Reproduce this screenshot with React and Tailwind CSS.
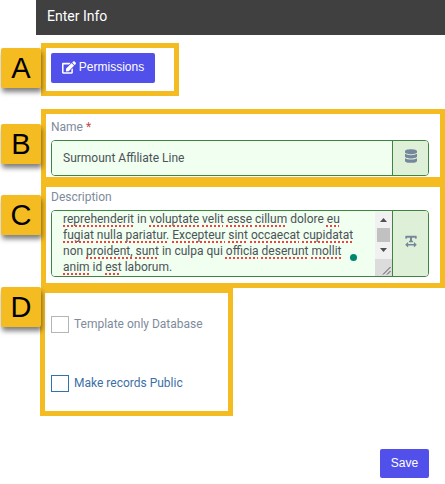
import { FaDatabase, FaEdit, FaTextWidth } from 'react-icons/fa';

// Each line is a list of words, a leading "~" marks the ones the spell checker flags
const DESCRIPTION = [
  '~reprehenderit in ~voluptate ~velit ~esse ~cillum dolore ~eu',
  '~fugiat ~nulla ~pariatur. ~Excepteur ~sint ~occaecat ~cupidatat',
  'non ~proident, ~sunt in culpa qui ~officia ~deserunt ~mollit',
  '~anim id ~est laborum.',
];

const descriptionText = DESCRIPTION.join('\n').replaceAll('~', '');

const Badge = ({ letter, className = '' }) => (
  <span
    className={`absolute z-10 flex h-10 w-10 items-center justify-center rounded-xs bg-[#f5bc22] font-['Liberation_Sans',sans-serif] text-[29px] leading-none text-black shadow-[1px_4px_5px_rgba(0,0,0,0.5)] ${className}`}
  >
    {letter}
  </span>
);

const Addon = ({ children }) => (
  <span className="flex w-9 shrink-0 items-center justify-center border-l border-[#3f8443] bg-[#dff0d8] text-[#76879b]">
    {children}
  </span>
);

const SpellingMarks = () => (
  <div aria-hidden="true" className="pointer-events-none absolute inset-x-0 top-0 pl-[11px] leading-4 text-transparent whitespace-pre">
    {DESCRIPTION.map((line, i) => (
      <div key={i}>
        {line.split(' ').map((word, j) => {
          const flagged = word.startsWith('~');
          const text = word.replace('~', '');
          return (
            <span key={j}>
              {j > 0 && ' '}
              <span className={flagged ? 'underline decoration-[#f04040] decoration-dotted decoration-2 underline-offset-2 [text-decoration-skip-ink:none]' : ''}>
                {text}
              </span>
            </span>
          );
        })}
      </div>
    ))}
  </div>
);

const Scrollbar = () => (
  <div aria-hidden="true" className="flex w-[17px] shrink-0 flex-col bg-[#f1f1f1]">
    <svg viewBox="0 0 17 17" className="h-[17px] w-[17px]" fill="#505050">
      <path d="M5 11h7L8.500 7z" />
    </svg>
    <div className="mx-[2px] h-[14px] bg-[#c1c1c1]" />
    <svg viewBox="0 0 17 17" className="h-[17px] w-[17px]" fill="#505050">
      <path d="M5 6h7l-3.500 4z" />
    </svg>
    <svg viewBox="0 0 17 17" className="mt-auto h-[17px] w-[17px] bg-[#dcdcdc]" fill="none" stroke="#505050">
      <path d="M8 15.500 15.500 8M12 15.500 15.500 12" />
    </svg>
  </div>
);

const CheckRow = ({ id, label, boxClass, labelClass }) => (
  <div className="flex items-center gap-[5px]">
    <input
      id={id}
      type="checkbox"
      className={`h-[17px] w-[18px] appearance-none border bg-white checked:bg-[#5250ea] ${boxClass}`}
    />
    <label htmlFor={id} className={labelClass}>{label}</label>
  </div>
);

export default function App() {
  return (
    <div className="bg-white pb-1 pl-9 font-['Roboto',sans-serif] text-[12px] leading-[17px] text-[#4d5257]">
      <header className="flex h-[35px] items-center bg-[#404040] px-[11px] pb-[2px] text-[14px] text-white">
        <h1>Enter Info</h1>
      </header>

      <form className="pt-2" onSubmit={(e) => e.preventDefault()}>
        {/* Permissions */}
        <section className="relative ml-[5px] w-[138px] border-[5px] border-[#f5bc22] p-[5px] pb-2">
          <Badge letter="A" className="top-0 -left-[45px]" />
          <button
            type="button"
            className="flex h-[30px] w-[104px] items-center justify-center gap-[3px] rounded-xs bg-[#5250ea] pb-[2px] font-['Liberation_Sans',sans-serif] text-white"
          >
            <FaEdit className="h-[13px] w-[14px]" />
            Permissions
          </button>
        </section>

        {/* Name */}
        <section className="relative mt-[13px] ml-[5px] border-[5px] border-[#f5bc22] pt-[5px] pr-[11px] pb-px pl-[5px]">
          <Badge letter="B" className="top-[10px] -left-[45px]" />
          <label htmlFor="name" className="block pb-1 text-[#7e8b9b]">
            Name <span className="text-[#c2474d]">*</span>
          </label>
          <div className="flex h-9 overflow-hidden rounded-sm border border-[#3f8443]">
            <input
              id="name"
              type="text"
              defaultValue="Surmount Affiliate Line"
              className="min-w-0 flex-1 bg-[#f0fff0] px-[11px] outline-none"
            />
            <Addon>
              <FaDatabase className="mb-1 h-[14px] w-3" />
            </Addon>
          </div>
        </section>

        {/* Description */}
        <section className="relative ml-[5px] border-[5px] border-[#f5bc22] pt-[2px] pr-[11px] pb-[6px] pl-[5px]">
          <Badge letter="C" className="top-2 -left-[45px]" />
          <label htmlFor="description" className="block pb-1 text-[#7e8b9b]">Description</label>
          <div className="flex h-[67px] overflow-hidden rounded-sm border border-[#3f8443]">
            <div className="relative min-w-0 flex-1 bg-[#f0fff0]">
              <textarea
                id="description"
                rows={4}
                spellCheck={false}
                defaultValue={descriptionText}
                className="block h-full w-full resize-none overflow-hidden pl-[11px] leading-4 whitespace-pre outline-none"
              />
              <SpellingMarks />
              <span className="absolute right-[18px] bottom-[15px] h-[7px] w-[7px] rounded-full bg-[#00866f]" />
            </div>
            <Scrollbar />
            <Addon>
              <FaTextWidth className="mb-1 h-[13px] w-3" />
            </Addon>
          </div>
        </section>

        {/* Options */}
        <section className="relative ml-1 flex h-32 w-[193px] flex-col gap-[42px] border-[5px] border-[#f5bc22] pt-[23px] pl-[6px]">
          <Badge letter="D" className="-top-[6px] -left-11" />
          <CheckRow id="template" label="Template only Database" boxClass="border-[#b5b5b5]" labelClass="text-[#7e8b9b]" />
          <CheckRow id="public" label="Make records Public" boxClass="border-[#2f74b0]" labelClass="text-[#3c6fa5]" />
        </section>

        <div className="flex justify-end pt-[33px] pr-4">
          <button
            type="submit"
            className="h-[29px] w-[49px] rounded-xs bg-[#5250ea] pb-px font-['Liberation_Sans',sans-serif] text-white"
          >
            Save
          </button>
        </div>
      </form>
    </div>
  );
}
